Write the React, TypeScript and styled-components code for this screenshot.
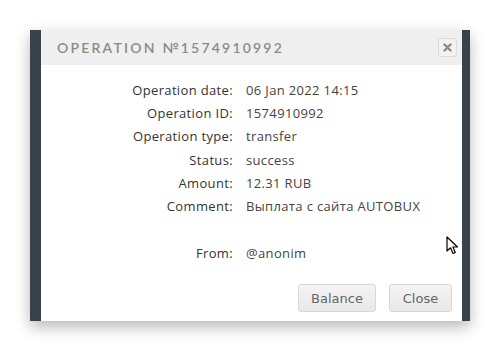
import React from "react";
import styled, { createGlobalStyle } from "styled-components";

const GlobalStyle = createGlobalStyle`
  html, body {
    margin: 0;
    padding: 0;
    background: #ffffff;
  }
  body {
    font-family: "Open Sans", "Liberation Sans", sans-serif;
  }
`;

const Page = styled.div`
  position: relative;
  width: 500px;
  height: 351px;
  padding: 30px 0 0 30px;
  box-sizing: border-box;
  overflow: hidden;
`;

const Frame = styled.div`
  width: 440px;
  height: 291px;
  background: #36434b;
  padding: 0 8px 0 11px;
  box-sizing: border-box;
  display: flex;
  box-shadow: 0 6px 14px rgba(0, 0, 0, 0.28);
`;

const Dialog = styled.div`
  flex: 1;
  background: #ffffff;
  display: flex;
  flex-direction: column;
`;

const Header = styled.div`
  height: 35px;
  background: #efefef;
  display: flex;
  align-items: center;
  justify-content: space-between;
  padding: 0 5px 0 16px;
`;

const Title = styled.h3`
  margin: 0;
  font-family: "Lato", "Liberation Sans", sans-serif;
  font-size: 14px;
  font-weight: 600;
  letter-spacing: 2.2px;
  color: #8a8a8a;
`;

const CloseIcon = styled.button`
  width: 19px;
  height: 19px;
  padding: 0;
  border: 1px solid #dcdcdc;
  border-radius: 3px;
  background: #f2f2f2;
  display: flex;
  align-items: center;
  justify-content: center;
`;

const Body = styled.dl`
  margin: 0;
  padding: 13px 0 0 0;
  display: grid;
  grid-template-columns: 192px 1fr;
  column-gap: 13px;
  grid-auto-rows: 23.3px;
  align-items: center;
  font-size: 13px;
  letter-spacing: 0.35px;
`;

const Label = styled.dt`
  text-align: right;
  color: #333333;
`;

const Value = styled.dd`
  margin: 0;
  color: #444444;
`;

const Spacer = styled.div`
  grid-column: 1 / span 2;
`;

const Footer = styled.div`
  margin-top: auto;
  display: flex;
  justify-content: flex-end;
  gap: 13px;
  padding: 0 10px 9px 0;
`;

const Button = styled.button<{ $width: number }>`
  width: ${(p) => p.$width}px;
  height: 28px;
  border: 1px solid #d8d8d8;
  border-radius: 3px;
  background: linear-gradient(#f4f4f4, #e8e8e8);
  color: #666666;
  font-family: "DejaVu Sans", sans-serif;
  font-size: 13px;
  padding: 0;
`;

const Cursor = styled.svg`
  position: absolute;
  left: 446px;
  top: 236px;
`;

const rows: [string, string][] = [
  ["Operation date:", "06 Jan 2022 14:15"],
  ["Operation ID:", "1574910992"],
  ["Operation type:", "transfer"],
  ["Status:", "success"],
  ["Amount:", "12.31 RUB"],
  ["Comment:", "Выплата с сайта AUTOBUX"],
];

const App: React.FC = () => {
  return (
    <Page>
      <GlobalStyle />
      <Frame>
        <Dialog>
          <Header>
            <Title>OPERATION №1574910992</Title>
            <CloseIcon>
              <svg width="9" height="9" viewBox="0 0 9 9">
                <path
                  d="M1.5 1.5 L7.5 7.5 M7.5 1.5 L1.5 7.5"
                  stroke="#8a8a8a"
                  strokeWidth="2.4"
                  strokeLinecap="round"
                />
              </svg>
            </CloseIcon>
          </Header>
          <Body>
            {rows.map(([label, value]) => (
              <React.Fragment key={label}>
                <Label>{label}</Label>
                <Value>{value}</Value>
              </React.Fragment>
            ))}
            <Spacer />
            <Label>From:</Label>
            <Value>@anonim</Value>
          </Body>
          <Footer>
            <Button $width={78}>Balance</Button>
            <Button $width={63}>Close</Button>
          </Footer>
        </Dialog>
      </Frame>
      <Cursor width="14" height="20" viewBox="0 0 14 20">
        <path
          d="M1 1 L1 15 L4.5 11.8 L7 17.5 L9.3 16.5 L6.9 11 L11.5 11 Z"
          fill="#ffffff"
          stroke="#000000"
          strokeWidth="1.2"
          strokeLinejoin="round"
        />
      </Cursor>
    </Page>
  );
};

export default App;
